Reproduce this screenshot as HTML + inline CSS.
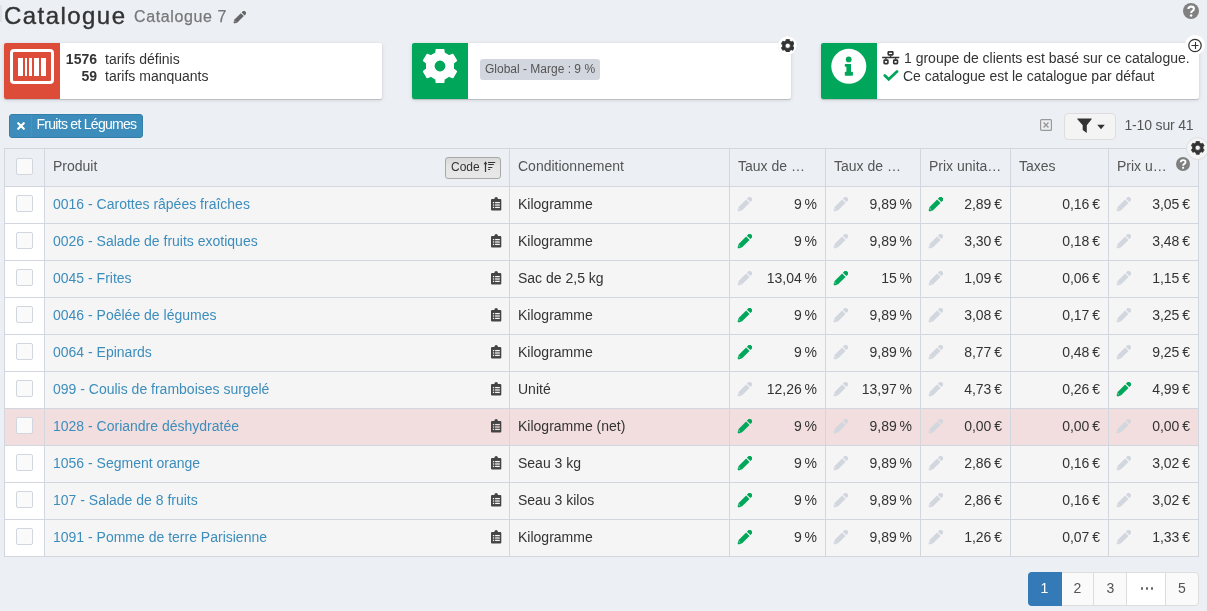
<!DOCTYPE html><html><head><meta charset="utf-8"><style>
*{margin:0;padding:0;box-sizing:border-box}
html,body{width:1207px;height:611px;overflow:hidden;background:#ecf0f5;font-family:"Liberation Sans",sans-serif;font-size:14px;color:#333}
.ab{position:absolute}
.t{position:absolute;white-space:nowrap;line-height:16px}
.vl{position:absolute;width:1px;background:#d2d6de}
.hl{position:absolute;height:1px;background:#d2d6de}
.cb{position:absolute;width:17px;height:17px;border:1px solid #d2d6de;border-radius:2px;background:#fafafa}
.box{position:absolute;top:43px;height:56px;background:#fff;border-radius:2px;box-shadow:0 1px 1px rgba(0,0,0,0.16),0 1px 4px rgba(0,0,0,0.13)}
.ic{position:absolute;left:0;top:0;width:56px;height:56px;border-radius:2px 0 0 2px}
</style></head><body><div id="w" style="position:absolute;left:0;top:0;width:1207px;height:611px;overflow:hidden;will-change:transform">

<div class="ab" style="left:0;top:5px;width:1.5px;height:17px;background:#dfe2e6"></div>
<div class="t" style="left:4px;top:1px;font-size:24px;line-height:30px;color:#333;letter-spacing:1.45px;-webkit-text-stroke:0.4px #333">Catalogue</div>
<div class="t" style="left:134px;top:7px;font-size:16px;line-height:20px;color:#777;letter-spacing:0.62px;-webkit-text-stroke:0.25px #777">Catalogue 7</div>
<div class="ab" style="left:233px;top:11px"><svg width="13" height="13" viewBox="0 0 16 16"><g transform="translate(8,8) rotate(-45)"><path fill="#666" d="M-9.6,-0.9 Q-9.8,0 -9.6,0.9 L-6.2,2.6 L5.0,2.6 L5.0,-2.6 L-6.2,-2.6 Z"/><path fill="#666" d="M6.2,-2.6 L8.8,-2.6 Q10.3,-2.6 10.3,-1.1 L10.3,1.1 Q10.3,2.6 8.8,2.6 L6.2,2.6 Z"/><circle cx="-7.4" cy="-0.5" r="0.75" fill="#f5f5f5" opacity="0.55"/></g></svg></div>
<svg class="ab" style="left:1183px;top:3px" width="16" height="16" viewBox="0 0 16 16"><circle cx="8" cy="8" r="8" fill="#808080"/><path d="M5.4,6 Q5.4,3.6 8.2,3.6 Q10.9,3.6 10.9,5.8 Q10.9,7.1 9.5,7.9 Q8.2,8.6 8.2,9.9" fill="none" stroke="#fff" stroke-width="2.1" stroke-linecap="butt"/><circle cx="8.1" cy="12.4" r="1.25" fill="#fff"/></svg>
<div class="box" style="left:4px;width:378px">
<div class="ic" style="background:#dd4b39"><div class="ab" style="left:5.7px;top:5.5px;width:44.7px;height:35.8px;border:3.4px solid #fff;border-radius:4px"></div>
<div class="ab" style="left:14.3px;top:15px;width:4.6px;height:18px;background:#fff"></div>
<div class="ab" style="left:21px;top:15px;width:2.3px;height:18px;background:#fff"></div>
<div class="ab" style="left:25.2px;top:15px;width:2.9px;height:18px;background:#fff"></div>
<div class="ab" style="left:30.4px;top:15px;width:4.6px;height:18px;background:#fff"></div>
<div class="ab" style="left:36.9px;top:15px;width:4.9px;height:18px;background:#fff"></div>
</div>
<div class="t" style="left:56px;top:8px;width:37px;text-align:right;font-weight:bold">1576</div>
<div class="t" style="left:101px;top:8px">tarifs définis</div>
<div class="t" style="left:56px;top:25px;width:37px;text-align:right;font-weight:bold">59</div>
<div class="t" style="left:101px;top:25px">tarifs manquants</div>
</div>
<div class="box" style="left:412px;width:379px">
<div class="ic" style="background:#00a65a"><div class="ab" style="left:11px;top:6.4px"><svg width="34" height="34" viewBox="0 0 16 16"><path fill="#fff" fill-rule="evenodd" stroke="#fff" stroke-width="0.9" stroke-linejoin="round" d="M9.83,1.97 L9.59,0.16 L6.41,0.16 L6.17,1.97 L3.69,3.40 L2.01,2.70 L0.41,5.46 L1.86,6.57 L1.86,9.43 L0.41,10.54 L2.01,13.30 L3.69,12.60 L6.17,14.03 L6.41,15.84 L9.59,15.84 L9.83,14.03 L12.31,12.60 L13.99,13.30 L15.59,10.54 L14.14,9.43 L14.14,6.57 L15.59,5.46 L13.99,2.70 L12.31,3.40 Z M5.00,8.00 a3.0,3.0 0 1,0 6.0,0 a3.0,3.0 0 1,0 -6.0,0 Z"/></svg></div></div>
<div class="ab" style="left:68px;top:16px;width:120px;height:21px;background:#d2d6de;border-radius:3px"></div>
<div class="t" style="left:73px;top:17.5px;font-size:12px;color:#555">Global - Marge : 9 %</div>
</div>
<div class="ab" style="left:778px;top:35.5px;width:19px;height:19px;border-radius:50%;background:#fff;box-shadow:0 0 1px rgba(0,0,0,0.15)"><div class="ab" style="left:2.5px;top:3px"><svg width="13.5" height="13.5" viewBox="0 0 16 16"><path fill="#333" fill-rule="evenodd" stroke="#333" stroke-width="0.9" stroke-linejoin="round" d="M10.03,2.03 L9.77,0.20 L6.23,0.20 L5.97,2.03 L3.85,3.26 L2.13,2.57 L0.36,5.63 L1.82,6.77 L1.82,9.23 L0.36,10.37 L2.13,13.43 L3.85,12.74 L5.97,13.97 L6.23,15.80 L9.77,15.80 L10.03,13.97 L12.15,12.74 L13.87,13.43 L15.64,10.37 L14.18,9.23 L14.18,6.77 L15.64,5.63 L13.87,2.57 L12.15,3.26 Z M4.90,8.00 a3.1,3.1 0 1,0 6.2,0 a3.1,3.1 0 1,0 -6.2,0 Z"/></svg></div></div>
<div class="box" style="left:821px;width:378px">
<div class="ic" style="background:#00a65a"><svg class="ab" style="left:0;top:0" width="56" height="56" viewBox="0 0 56 56"><circle cx="27.8" cy="23.3" r="17.5" fill="#fff"/><circle cx="27.7" cy="16.4" r="2.9" fill="#00a65a"/><path fill="#00a65a" d="M24.2,21 H30 V28.8 H31.2 Q31.9,28.8 31.9,29.5 V32 Q31.9,32.7 31.2,32.7 H24.4 Q23.8,32.7 23.8,32 V29.5 Q23.8,28.8 24.4,28.8 H25.4 V23.8 H24.4 Q23.8,23.8 23.8,23.1 V21.6 Q23.8,21 24.2,21 Z"/></svg></div>
<div class="ab" style="left:60px;top:7px"><svg width="20" height="17" viewBox="0 0 20 17" fill="none" stroke="#333"><rect x="7.2" y="1.9" width="4.7" height="3.0" rx="0.6" stroke-width="1.6"/><path d="M9.55,5.5 V7.5 M1.1,7.5 H18.3 M4.9,7.5 V9.6 M14.6,7.5 V9.6" stroke-width="1.4"/><rect x="3.1" y="10.1" width="3.8" height="3.5" rx="0.6" stroke-width="1.6"/><rect x="12.7" y="10.1" width="3.8" height="3.5" rx="0.6" stroke-width="1.6"/></svg></div>
<div class="t" style="left:83px;top:7px">1 groupe de clients est basé sur ce catalogue.</div>
<div class="ab" style="left:62px;top:26.3px"><svg width="16" height="12" viewBox="0 0 16 12"><path d="M1.8,5.5 L5.7,9.3 L14,1.5" fill="none" stroke="#00a65a" stroke-width="2.7" stroke-linecap="round"/></svg></div>
<div class="t" style="left:82px;top:24.5px">Ce catalogue est le catalogue par défaut</div>
</div>
<div class="ab" style="left:1185px;top:35px;width:20px;height:20px;border-radius:50%;background:#fff"><svg class="ab" style="left:2px;top:2px" width="16" height="16" viewBox="0 0 16 16"><circle cx="8" cy="8.5" r="6.2" fill="none" stroke="#333" stroke-width="1.25"/><path d="M8.5,5 V12 M4.5,8.5 H11.5" stroke="#333" stroke-width="1.1"/></svg></div>
<div class="ab" style="left:9px;top:114px;width:134px;height:24px;background:#3c8dbc;border:1px solid #367fa9;border-radius:3px"></div>
<div class="ab" style="left:31px;top:115px;width:1px;height:22px;background:#3f92d8"></div>
<svg class="ab" style="left:16.5px;top:122px" width="8" height="8" viewBox="0 0 8 8"><path d="M1.2,1.2 L6.8,6.8 M6.8,1.2 L1.2,6.8" stroke="#fff" stroke-width="2.1" stroke-linecap="round"/></svg>
<div class="t" style="left:36.5px;top:116px;color:#fff;font-size:14px;letter-spacing:-0.72px">Fruits et Légumes</div>
<svg class="ab" style="left:1040px;top:119px" width="12" height="12" viewBox="0 0 12 12"><rect x="0.6" y="0.6" width="10.8" height="10.8" rx="1" fill="none" stroke="#999" stroke-width="1.2"/><path d="M3.5,3.5 L8.5,8.5 M8.5,3.5 L3.5,8.5" stroke="#999" stroke-width="1.5"/></svg>
<div class="ab" style="left:1064px;top:113px;width:52px;height:27px;background:#f4f4f4;border:1px solid #ddd;border-radius:4px"></div>
<svg class="ab" style="left:1076px;top:118px" width="17" height="16" viewBox="0 0 17 16"><path d="M1.6,0.6 H15.4 Q16,0.6 15.6,1.2 L10.8,7.2 V14.9 L6.7,12 V7.2 L1.4,1.2 Q1,0.6 1.6,0.6 Z" fill="#333"/></svg>
<svg class="ab" style="left:1097px;top:124px" width="8" height="6" viewBox="0 0 8 6"><path d="M0.2,0.8 H7.8 L4,5.2 Z" fill="#333"/></svg>
<div class="t" style="left:1124.5px;top:117px;color:#555;letter-spacing:-0.17px">1-10 sur 41</div>
<div class="ab" style="left:4px;top:148px;width:1195px;height:38px;background:#ecf0f5"></div>
<div class="ab" style="left:4px;top:186px;width:41px;height:37px;background:#fff"></div>
<div class="ab" style="left:44px;top:186px;width:1155px;height:37px;background:#f5f5f5"></div>
<div class="ab" style="left:4px;top:223px;width:41px;height:37px;background:#fff"></div>
<div class="ab" style="left:44px;top:223px;width:1155px;height:37px;background:#f5f5f5"></div>
<div class="ab" style="left:4px;top:260px;width:41px;height:37px;background:#fff"></div>
<div class="ab" style="left:44px;top:260px;width:1155px;height:37px;background:#f5f5f5"></div>
<div class="ab" style="left:4px;top:297px;width:41px;height:37px;background:#fff"></div>
<div class="ab" style="left:44px;top:297px;width:1155px;height:37px;background:#f5f5f5"></div>
<div class="ab" style="left:4px;top:334px;width:41px;height:37px;background:#fff"></div>
<div class="ab" style="left:44px;top:334px;width:1155px;height:37px;background:#f5f5f5"></div>
<div class="ab" style="left:4px;top:371px;width:41px;height:37px;background:#fff"></div>
<div class="ab" style="left:44px;top:371px;width:1155px;height:37px;background:#f5f5f5"></div>
<div class="ab" style="left:4px;top:408px;width:41px;height:37px;background:#f2dede"></div>
<div class="ab" style="left:44px;top:408px;width:1155px;height:37px;background:#f2dede"></div>
<div class="ab" style="left:4px;top:445px;width:41px;height:37px;background:#fff"></div>
<div class="ab" style="left:44px;top:445px;width:1155px;height:37px;background:#f5f5f5"></div>
<div class="ab" style="left:4px;top:482px;width:41px;height:37px;background:#fff"></div>
<div class="ab" style="left:44px;top:482px;width:1155px;height:37px;background:#f5f5f5"></div>
<div class="ab" style="left:4px;top:519px;width:41px;height:37px;background:#fff"></div>
<div class="ab" style="left:44px;top:519px;width:1155px;height:37px;background:#f5f5f5"></div>
<div class="vl" style="left:4px;top:148px;height:409px"></div>
<div class="vl" style="left:44px;top:148px;height:409px"></div>
<div class="vl" style="left:509px;top:148px;height:409px"></div>
<div class="vl" style="left:729px;top:148px;height:409px"></div>
<div class="vl" style="left:825px;top:148px;height:409px"></div>
<div class="vl" style="left:920px;top:148px;height:409px"></div>
<div class="vl" style="left:1010px;top:148px;height:409px"></div>
<div class="vl" style="left:1108px;top:148px;height:409px"></div>
<div class="vl" style="left:1198px;top:148px;height:409px"></div>
<div class="hl" style="left:4px;top:148px;width:1195px"></div>
<div class="hl" style="left:4px;top:186px;width:1195px"></div>
<div class="hl" style="left:4px;top:223px;width:1195px"></div>
<div class="hl" style="left:4px;top:260px;width:1195px"></div>
<div class="hl" style="left:4px;top:297px;width:1195px"></div>
<div class="hl" style="left:4px;top:334px;width:1195px"></div>
<div class="hl" style="left:4px;top:371px;width:1195px"></div>
<div class="hl" style="left:4px;top:408px;width:1195px"></div>
<div class="hl" style="left:4px;top:445px;width:1195px"></div>
<div class="hl" style="left:4px;top:482px;width:1195px"></div>
<div class="hl" style="left:4px;top:519px;width:1195px"></div>
<div class="hl" style="left:4px;top:556px;width:1195px"></div>
<div class="cb" style="left:16px;top:158px"></div>
<div class="t" style="left:53px;top:158px;color:#555">Produit</div>
<div class="t" style="left:518px;top:158px;color:#555">Conditionnement</div>
<div class="t" style="left:738px;top:158px;color:#555">Taux de …</div>
<div class="t" style="left:834px;top:158px;color:#555">Taux de …</div>
<div class="t" style="left:929px;top:158px;color:#555">Prix unita…</div>
<div class="t" style="left:1019px;top:158px;color:#555">Taxes</div>
<div class="t" style="left:1117px;top:158px;color:#555">Prix u…</div>
<div class="ab" style="left:445px;top:157px;width:56px;height:22px;border:1px solid #a8a8a8;border-radius:3px;background:linear-gradient(#d8d8d8,#e5e5e5 45%,#e8e8e8)"></div>
<div class="t" style="left:451px;top:159px;font-size:12px;color:#333">Code</div>
<svg class="ab" style="left:483px;top:160px" width="14" height="14" viewBox="0 0 14 14"><path d="M2.5,12 V3" stroke="#333" stroke-width="1.2" fill="none"/><path d="M0.7,4.2 L2.5,1.3 L4.3,4.2 Z" fill="#333"/><path d="M5,2.5 H12.2 M5.2,4.5 H10.8 M5.2,7.5 H9.3 M5.2,9.5 H7.2" stroke="#333" stroke-width="1.05"/></svg>
<svg class="ab" style="left:1176px;top:157px" width="14" height="14" viewBox="0 0 16 16"><circle cx="8" cy="8" r="8" fill="#808080"/><path d="M5.4,6 Q5.4,3.6 8.2,3.6 Q10.9,3.6 10.9,5.8 Q10.9,7.1 9.5,7.9 Q8.2,8.6 8.2,9.9" fill="none" stroke="#fff" stroke-width="2.1" stroke-linecap="butt"/><circle cx="8.1" cy="12.4" r="1.25" fill="#fff"/></svg>
<div class="ab" style="left:1186px;top:137px;width:23px;height:23px;border-radius:50%;background:#f4f4f4;border:1px solid #ddd"><div class="ab" style="left:4px;top:3px"><svg width="13.5" height="13.5" viewBox="0 0 16 16"><path fill="#333" fill-rule="evenodd" stroke="#333" stroke-width="0.9" stroke-linejoin="round" d="M10.03,2.03 L9.77,0.20 L6.23,0.20 L5.97,2.03 L3.85,3.26 L2.13,2.57 L0.36,5.63 L1.82,6.77 L1.82,9.23 L0.36,10.37 L2.13,13.43 L3.85,12.74 L5.97,13.97 L6.23,15.80 L9.77,15.80 L10.03,13.97 L12.15,12.74 L13.87,13.43 L15.64,10.37 L14.18,9.23 L14.18,6.77 L15.64,5.63 L13.87,2.57 L12.15,3.26 Z M4.90,8.00 a3.1,3.1 0 1,0 6.2,0 a3.1,3.1 0 1,0 -6.2,0 Z"/></svg></div></div>
<div class="cb" style="left:16px;top:195px"></div>
<div class="t" style="left:53px;top:196px;color:#3c8dbc">0016 - Carottes râpées fraîches</div>
<div class="ab" style="left:491px;top:197px"><svg width="11" height="14" viewBox="0 0 11 14"><path fill="#444" d="M1,2 H3.3 Q3.5,0.1 5.15,0.1 Q6.8,0.1 7,2 H9.3 Q10.3,2 10.3,3 V12.4 Q10.3,13.4 9.3,13.4 H1 Q0,13.4 0,12.4 V3 Q0,2 1,2 Z"/><rect x="1.9" y="4.95" width="1.3" height="1.3" fill="#f5f5f5"/><rect x="4.1" y="4.95" width="4.7" height="1.3" fill="#f5f5f5"/><rect x="1.9" y="7.35" width="1.3" height="1.3" fill="#f5f5f5"/><rect x="4.1" y="7.35" width="4.7" height="1.3" fill="#f5f5f5"/><rect x="1.9" y="9.75" width="1.3" height="1.3" fill="#f5f5f5"/><rect x="4.1" y="9.75" width="4.7" height="1.3" fill="#f5f5f5"/></svg></div>
<div class="t" style="left:518px;top:196px">Kilogramme</div>
<div class="ab" style="left:737px;top:197px"><svg width="15" height="15" viewBox="0 0 16 16"><g transform="translate(8,8) rotate(-45)"><path fill="#d2d6de" d="M-9.6,-0.9 Q-9.8,0 -9.6,0.9 L-6.2,2.6 L5.0,2.6 L5.0,-2.6 L-6.2,-2.6 Z"/><path fill="#d2d6de" d="M6.2,-2.6 L8.8,-2.6 Q10.3,-2.6 10.3,-1.1 L10.3,1.1 Q10.3,2.6 8.8,2.6 L6.2,2.6 Z"/><circle cx="-7.4" cy="-0.5" r="0.75" fill="#f5f5f5" opacity="0.55"/></g></svg></div>
<div class="t" style="right:390px;top:196px">9 %</div>
<div class="ab" style="left:833px;top:197px"><svg width="15" height="15" viewBox="0 0 16 16"><g transform="translate(8,8) rotate(-45)"><path fill="#d2d6de" d="M-9.6,-0.9 Q-9.8,0 -9.6,0.9 L-6.2,2.6 L5.0,2.6 L5.0,-2.6 L-6.2,-2.6 Z"/><path fill="#d2d6de" d="M6.2,-2.6 L8.8,-2.6 Q10.3,-2.6 10.3,-1.1 L10.3,1.1 Q10.3,2.6 8.8,2.6 L6.2,2.6 Z"/><circle cx="-7.4" cy="-0.5" r="0.75" fill="#f5f5f5" opacity="0.55"/></g></svg></div>
<div class="t" style="right:295px;top:196px">9,89 %</div>
<div class="ab" style="left:928px;top:197px"><svg width="15" height="15" viewBox="0 0 16 16"><g transform="translate(8,8) rotate(-45)"><path fill="#00a65a" d="M-9.6,-0.9 Q-9.8,0 -9.6,0.9 L-6.2,2.6 L5.0,2.6 L5.0,-2.6 L-6.2,-2.6 Z"/><path fill="#00a65a" d="M6.2,-2.6 L8.8,-2.6 Q10.3,-2.6 10.3,-1.1 L10.3,1.1 Q10.3,2.6 8.8,2.6 L6.2,2.6 Z"/><circle cx="-7.4" cy="-0.5" r="0.75" fill="#f5f5f5" opacity="0.55"/></g></svg></div>
<div class="t" style="right:205px;top:196px">2,89 €</div>
<div class="t" style="right:107px;top:196px">0,16 €</div>
<div class="ab" style="left:1116px;top:197px"><svg width="15" height="15" viewBox="0 0 16 16"><g transform="translate(8,8) rotate(-45)"><path fill="#d2d6de" d="M-9.6,-0.9 Q-9.8,0 -9.6,0.9 L-6.2,2.6 L5.0,2.6 L5.0,-2.6 L-6.2,-2.6 Z"/><path fill="#d2d6de" d="M6.2,-2.6 L8.8,-2.6 Q10.3,-2.6 10.3,-1.1 L10.3,1.1 Q10.3,2.6 8.8,2.6 L6.2,2.6 Z"/><circle cx="-7.4" cy="-0.5" r="0.75" fill="#f5f5f5" opacity="0.55"/></g></svg></div>
<div class="t" style="right:17px;top:196px">3,05 €</div>
<div class="cb" style="left:16px;top:232px"></div>
<div class="t" style="left:53px;top:233px;color:#3c8dbc">0026 - Salade de fruits exotiques</div>
<div class="ab" style="left:491px;top:234px"><svg width="11" height="14" viewBox="0 0 11 14"><path fill="#444" d="M1,2 H3.3 Q3.5,0.1 5.15,0.1 Q6.8,0.1 7,2 H9.3 Q10.3,2 10.3,3 V12.4 Q10.3,13.4 9.3,13.4 H1 Q0,13.4 0,12.4 V3 Q0,2 1,2 Z"/><rect x="1.9" y="4.95" width="1.3" height="1.3" fill="#f5f5f5"/><rect x="4.1" y="4.95" width="4.7" height="1.3" fill="#f5f5f5"/><rect x="1.9" y="7.35" width="1.3" height="1.3" fill="#f5f5f5"/><rect x="4.1" y="7.35" width="4.7" height="1.3" fill="#f5f5f5"/><rect x="1.9" y="9.75" width="1.3" height="1.3" fill="#f5f5f5"/><rect x="4.1" y="9.75" width="4.7" height="1.3" fill="#f5f5f5"/></svg></div>
<div class="t" style="left:518px;top:233px">Kilogramme</div>
<div class="ab" style="left:737px;top:234px"><svg width="15" height="15" viewBox="0 0 16 16"><g transform="translate(8,8) rotate(-45)"><path fill="#00a65a" d="M-9.6,-0.9 Q-9.8,0 -9.6,0.9 L-6.2,2.6 L5.0,2.6 L5.0,-2.6 L-6.2,-2.6 Z"/><path fill="#00a65a" d="M6.2,-2.6 L8.8,-2.6 Q10.3,-2.6 10.3,-1.1 L10.3,1.1 Q10.3,2.6 8.8,2.6 L6.2,2.6 Z"/><circle cx="-7.4" cy="-0.5" r="0.75" fill="#f5f5f5" opacity="0.55"/></g></svg></div>
<div class="t" style="right:390px;top:233px">9 %</div>
<div class="ab" style="left:833px;top:234px"><svg width="15" height="15" viewBox="0 0 16 16"><g transform="translate(8,8) rotate(-45)"><path fill="#d2d6de" d="M-9.6,-0.9 Q-9.8,0 -9.6,0.9 L-6.2,2.6 L5.0,2.6 L5.0,-2.6 L-6.2,-2.6 Z"/><path fill="#d2d6de" d="M6.2,-2.6 L8.8,-2.6 Q10.3,-2.6 10.3,-1.1 L10.3,1.1 Q10.3,2.6 8.8,2.6 L6.2,2.6 Z"/><circle cx="-7.4" cy="-0.5" r="0.75" fill="#f5f5f5" opacity="0.55"/></g></svg></div>
<div class="t" style="right:295px;top:233px">9,89 %</div>
<div class="ab" style="left:928px;top:234px"><svg width="15" height="15" viewBox="0 0 16 16"><g transform="translate(8,8) rotate(-45)"><path fill="#d2d6de" d="M-9.6,-0.9 Q-9.8,0 -9.6,0.9 L-6.2,2.6 L5.0,2.6 L5.0,-2.6 L-6.2,-2.6 Z"/><path fill="#d2d6de" d="M6.2,-2.6 L8.8,-2.6 Q10.3,-2.6 10.3,-1.1 L10.3,1.1 Q10.3,2.6 8.8,2.6 L6.2,2.6 Z"/><circle cx="-7.4" cy="-0.5" r="0.75" fill="#f5f5f5" opacity="0.55"/></g></svg></div>
<div class="t" style="right:205px;top:233px">3,30 €</div>
<div class="t" style="right:107px;top:233px">0,18 €</div>
<div class="ab" style="left:1116px;top:234px"><svg width="15" height="15" viewBox="0 0 16 16"><g transform="translate(8,8) rotate(-45)"><path fill="#d2d6de" d="M-9.6,-0.9 Q-9.8,0 -9.6,0.9 L-6.2,2.6 L5.0,2.6 L5.0,-2.6 L-6.2,-2.6 Z"/><path fill="#d2d6de" d="M6.2,-2.6 L8.8,-2.6 Q10.3,-2.6 10.3,-1.1 L10.3,1.1 Q10.3,2.6 8.8,2.6 L6.2,2.6 Z"/><circle cx="-7.4" cy="-0.5" r="0.75" fill="#f5f5f5" opacity="0.55"/></g></svg></div>
<div class="t" style="right:17px;top:233px">3,48 €</div>
<div class="cb" style="left:16px;top:269px"></div>
<div class="t" style="left:53px;top:270px;color:#3c8dbc">0045 - Frites</div>
<div class="ab" style="left:491px;top:271px"><svg width="11" height="14" viewBox="0 0 11 14"><path fill="#444" d="M1,2 H3.3 Q3.5,0.1 5.15,0.1 Q6.8,0.1 7,2 H9.3 Q10.3,2 10.3,3 V12.4 Q10.3,13.4 9.3,13.4 H1 Q0,13.4 0,12.4 V3 Q0,2 1,2 Z"/><rect x="1.9" y="4.95" width="1.3" height="1.3" fill="#f5f5f5"/><rect x="4.1" y="4.95" width="4.7" height="1.3" fill="#f5f5f5"/><rect x="1.9" y="7.35" width="1.3" height="1.3" fill="#f5f5f5"/><rect x="4.1" y="7.35" width="4.7" height="1.3" fill="#f5f5f5"/><rect x="1.9" y="9.75" width="1.3" height="1.3" fill="#f5f5f5"/><rect x="4.1" y="9.75" width="4.7" height="1.3" fill="#f5f5f5"/></svg></div>
<div class="t" style="left:518px;top:270px">Sac de 2,5 kg</div>
<div class="ab" style="left:737px;top:271px"><svg width="15" height="15" viewBox="0 0 16 16"><g transform="translate(8,8) rotate(-45)"><path fill="#d2d6de" d="M-9.6,-0.9 Q-9.8,0 -9.6,0.9 L-6.2,2.6 L5.0,2.6 L5.0,-2.6 L-6.2,-2.6 Z"/><path fill="#d2d6de" d="M6.2,-2.6 L8.8,-2.6 Q10.3,-2.6 10.3,-1.1 L10.3,1.1 Q10.3,2.6 8.8,2.6 L6.2,2.6 Z"/><circle cx="-7.4" cy="-0.5" r="0.75" fill="#f5f5f5" opacity="0.55"/></g></svg></div>
<div class="t" style="right:390px;top:270px">13,04 %</div>
<div class="ab" style="left:833px;top:271px"><svg width="15" height="15" viewBox="0 0 16 16"><g transform="translate(8,8) rotate(-45)"><path fill="#00a65a" d="M-9.6,-0.9 Q-9.8,0 -9.6,0.9 L-6.2,2.6 L5.0,2.6 L5.0,-2.6 L-6.2,-2.6 Z"/><path fill="#00a65a" d="M6.2,-2.6 L8.8,-2.6 Q10.3,-2.6 10.3,-1.1 L10.3,1.1 Q10.3,2.6 8.8,2.6 L6.2,2.6 Z"/><circle cx="-7.4" cy="-0.5" r="0.75" fill="#f5f5f5" opacity="0.55"/></g></svg></div>
<div class="t" style="right:295px;top:270px">15 %</div>
<div class="ab" style="left:928px;top:271px"><svg width="15" height="15" viewBox="0 0 16 16"><g transform="translate(8,8) rotate(-45)"><path fill="#d2d6de" d="M-9.6,-0.9 Q-9.8,0 -9.6,0.9 L-6.2,2.6 L5.0,2.6 L5.0,-2.6 L-6.2,-2.6 Z"/><path fill="#d2d6de" d="M6.2,-2.6 L8.8,-2.6 Q10.3,-2.6 10.3,-1.1 L10.3,1.1 Q10.3,2.6 8.8,2.6 L6.2,2.6 Z"/><circle cx="-7.4" cy="-0.5" r="0.75" fill="#f5f5f5" opacity="0.55"/></g></svg></div>
<div class="t" style="right:205px;top:270px">1,09 €</div>
<div class="t" style="right:107px;top:270px">0,06 €</div>
<div class="ab" style="left:1116px;top:271px"><svg width="15" height="15" viewBox="0 0 16 16"><g transform="translate(8,8) rotate(-45)"><path fill="#d2d6de" d="M-9.6,-0.9 Q-9.8,0 -9.6,0.9 L-6.2,2.6 L5.0,2.6 L5.0,-2.6 L-6.2,-2.6 Z"/><path fill="#d2d6de" d="M6.2,-2.6 L8.8,-2.6 Q10.3,-2.6 10.3,-1.1 L10.3,1.1 Q10.3,2.6 8.8,2.6 L6.2,2.6 Z"/><circle cx="-7.4" cy="-0.5" r="0.75" fill="#f5f5f5" opacity="0.55"/></g></svg></div>
<div class="t" style="right:17px;top:270px">1,15 €</div>
<div class="cb" style="left:16px;top:306px"></div>
<div class="t" style="left:53px;top:307px;color:#3c8dbc">0046 - Poêlée de légumes</div>
<div class="ab" style="left:491px;top:308px"><svg width="11" height="14" viewBox="0 0 11 14"><path fill="#444" d="M1,2 H3.3 Q3.5,0.1 5.15,0.1 Q6.8,0.1 7,2 H9.3 Q10.3,2 10.3,3 V12.4 Q10.3,13.4 9.3,13.4 H1 Q0,13.4 0,12.4 V3 Q0,2 1,2 Z"/><rect x="1.9" y="4.95" width="1.3" height="1.3" fill="#f5f5f5"/><rect x="4.1" y="4.95" width="4.7" height="1.3" fill="#f5f5f5"/><rect x="1.9" y="7.35" width="1.3" height="1.3" fill="#f5f5f5"/><rect x="4.1" y="7.35" width="4.7" height="1.3" fill="#f5f5f5"/><rect x="1.9" y="9.75" width="1.3" height="1.3" fill="#f5f5f5"/><rect x="4.1" y="9.75" width="4.7" height="1.3" fill="#f5f5f5"/></svg></div>
<div class="t" style="left:518px;top:307px">Kilogramme</div>
<div class="ab" style="left:737px;top:308px"><svg width="15" height="15" viewBox="0 0 16 16"><g transform="translate(8,8) rotate(-45)"><path fill="#00a65a" d="M-9.6,-0.9 Q-9.8,0 -9.6,0.9 L-6.2,2.6 L5.0,2.6 L5.0,-2.6 L-6.2,-2.6 Z"/><path fill="#00a65a" d="M6.2,-2.6 L8.8,-2.6 Q10.3,-2.6 10.3,-1.1 L10.3,1.1 Q10.3,2.6 8.8,2.6 L6.2,2.6 Z"/><circle cx="-7.4" cy="-0.5" r="0.75" fill="#f5f5f5" opacity="0.55"/></g></svg></div>
<div class="t" style="right:390px;top:307px">9 %</div>
<div class="ab" style="left:833px;top:308px"><svg width="15" height="15" viewBox="0 0 16 16"><g transform="translate(8,8) rotate(-45)"><path fill="#d2d6de" d="M-9.6,-0.9 Q-9.8,0 -9.6,0.9 L-6.2,2.6 L5.0,2.6 L5.0,-2.6 L-6.2,-2.6 Z"/><path fill="#d2d6de" d="M6.2,-2.6 L8.8,-2.6 Q10.3,-2.6 10.3,-1.1 L10.3,1.1 Q10.3,2.6 8.8,2.6 L6.2,2.6 Z"/><circle cx="-7.4" cy="-0.5" r="0.75" fill="#f5f5f5" opacity="0.55"/></g></svg></div>
<div class="t" style="right:295px;top:307px">9,89 %</div>
<div class="ab" style="left:928px;top:308px"><svg width="15" height="15" viewBox="0 0 16 16"><g transform="translate(8,8) rotate(-45)"><path fill="#d2d6de" d="M-9.6,-0.9 Q-9.8,0 -9.6,0.9 L-6.2,2.6 L5.0,2.6 L5.0,-2.6 L-6.2,-2.6 Z"/><path fill="#d2d6de" d="M6.2,-2.6 L8.8,-2.6 Q10.3,-2.6 10.3,-1.1 L10.3,1.1 Q10.3,2.6 8.8,2.6 L6.2,2.6 Z"/><circle cx="-7.4" cy="-0.5" r="0.75" fill="#f5f5f5" opacity="0.55"/></g></svg></div>
<div class="t" style="right:205px;top:307px">3,08 €</div>
<div class="t" style="right:107px;top:307px">0,17 €</div>
<div class="ab" style="left:1116px;top:308px"><svg width="15" height="15" viewBox="0 0 16 16"><g transform="translate(8,8) rotate(-45)"><path fill="#d2d6de" d="M-9.6,-0.9 Q-9.8,0 -9.6,0.9 L-6.2,2.6 L5.0,2.6 L5.0,-2.6 L-6.2,-2.6 Z"/><path fill="#d2d6de" d="M6.2,-2.6 L8.8,-2.6 Q10.3,-2.6 10.3,-1.1 L10.3,1.1 Q10.3,2.6 8.8,2.6 L6.2,2.6 Z"/><circle cx="-7.4" cy="-0.5" r="0.75" fill="#f5f5f5" opacity="0.55"/></g></svg></div>
<div class="t" style="right:17px;top:307px">3,25 €</div>
<div class="cb" style="left:16px;top:343px"></div>
<div class="t" style="left:53px;top:344px;color:#3c8dbc">0064 - Epinards</div>
<div class="ab" style="left:491px;top:345px"><svg width="11" height="14" viewBox="0 0 11 14"><path fill="#444" d="M1,2 H3.3 Q3.5,0.1 5.15,0.1 Q6.8,0.1 7,2 H9.3 Q10.3,2 10.3,3 V12.4 Q10.3,13.4 9.3,13.4 H1 Q0,13.4 0,12.4 V3 Q0,2 1,2 Z"/><rect x="1.9" y="4.95" width="1.3" height="1.3" fill="#f5f5f5"/><rect x="4.1" y="4.95" width="4.7" height="1.3" fill="#f5f5f5"/><rect x="1.9" y="7.35" width="1.3" height="1.3" fill="#f5f5f5"/><rect x="4.1" y="7.35" width="4.7" height="1.3" fill="#f5f5f5"/><rect x="1.9" y="9.75" width="1.3" height="1.3" fill="#f5f5f5"/><rect x="4.1" y="9.75" width="4.7" height="1.3" fill="#f5f5f5"/></svg></div>
<div class="t" style="left:518px;top:344px">Kilogramme</div>
<div class="ab" style="left:737px;top:345px"><svg width="15" height="15" viewBox="0 0 16 16"><g transform="translate(8,8) rotate(-45)"><path fill="#00a65a" d="M-9.6,-0.9 Q-9.8,0 -9.6,0.9 L-6.2,2.6 L5.0,2.6 L5.0,-2.6 L-6.2,-2.6 Z"/><path fill="#00a65a" d="M6.2,-2.6 L8.8,-2.6 Q10.3,-2.6 10.3,-1.1 L10.3,1.1 Q10.3,2.6 8.8,2.6 L6.2,2.6 Z"/><circle cx="-7.4" cy="-0.5" r="0.75" fill="#f5f5f5" opacity="0.55"/></g></svg></div>
<div class="t" style="right:390px;top:344px">9 %</div>
<div class="ab" style="left:833px;top:345px"><svg width="15" height="15" viewBox="0 0 16 16"><g transform="translate(8,8) rotate(-45)"><path fill="#d2d6de" d="M-9.6,-0.9 Q-9.8,0 -9.6,0.9 L-6.2,2.6 L5.0,2.6 L5.0,-2.6 L-6.2,-2.6 Z"/><path fill="#d2d6de" d="M6.2,-2.6 L8.8,-2.6 Q10.3,-2.6 10.3,-1.1 L10.3,1.1 Q10.3,2.6 8.8,2.6 L6.2,2.6 Z"/><circle cx="-7.4" cy="-0.5" r="0.75" fill="#f5f5f5" opacity="0.55"/></g></svg></div>
<div class="t" style="right:295px;top:344px">9,89 %</div>
<div class="ab" style="left:928px;top:345px"><svg width="15" height="15" viewBox="0 0 16 16"><g transform="translate(8,8) rotate(-45)"><path fill="#d2d6de" d="M-9.6,-0.9 Q-9.8,0 -9.6,0.9 L-6.2,2.6 L5.0,2.6 L5.0,-2.6 L-6.2,-2.6 Z"/><path fill="#d2d6de" d="M6.2,-2.6 L8.8,-2.6 Q10.3,-2.6 10.3,-1.1 L10.3,1.1 Q10.3,2.6 8.8,2.6 L6.2,2.6 Z"/><circle cx="-7.4" cy="-0.5" r="0.75" fill="#f5f5f5" opacity="0.55"/></g></svg></div>
<div class="t" style="right:205px;top:344px">8,77 €</div>
<div class="t" style="right:107px;top:344px">0,48 €</div>
<div class="ab" style="left:1116px;top:345px"><svg width="15" height="15" viewBox="0 0 16 16"><g transform="translate(8,8) rotate(-45)"><path fill="#d2d6de" d="M-9.6,-0.9 Q-9.8,0 -9.6,0.9 L-6.2,2.6 L5.0,2.6 L5.0,-2.6 L-6.2,-2.6 Z"/><path fill="#d2d6de" d="M6.2,-2.6 L8.8,-2.6 Q10.3,-2.6 10.3,-1.1 L10.3,1.1 Q10.3,2.6 8.8,2.6 L6.2,2.6 Z"/><circle cx="-7.4" cy="-0.5" r="0.75" fill="#f5f5f5" opacity="0.55"/></g></svg></div>
<div class="t" style="right:17px;top:344px">9,25 €</div>
<div class="cb" style="left:16px;top:380px"></div>
<div class="t" style="left:53px;top:381px;color:#3c8dbc">099 - Coulis de framboises surgelé</div>
<div class="ab" style="left:491px;top:382px"><svg width="11" height="14" viewBox="0 0 11 14"><path fill="#444" d="M1,2 H3.3 Q3.5,0.1 5.15,0.1 Q6.8,0.1 7,2 H9.3 Q10.3,2 10.3,3 V12.4 Q10.3,13.4 9.3,13.4 H1 Q0,13.4 0,12.4 V3 Q0,2 1,2 Z"/><rect x="1.9" y="4.95" width="1.3" height="1.3" fill="#f5f5f5"/><rect x="4.1" y="4.95" width="4.7" height="1.3" fill="#f5f5f5"/><rect x="1.9" y="7.35" width="1.3" height="1.3" fill="#f5f5f5"/><rect x="4.1" y="7.35" width="4.7" height="1.3" fill="#f5f5f5"/><rect x="1.9" y="9.75" width="1.3" height="1.3" fill="#f5f5f5"/><rect x="4.1" y="9.75" width="4.7" height="1.3" fill="#f5f5f5"/></svg></div>
<div class="t" style="left:518px;top:381px">Unité</div>
<div class="ab" style="left:737px;top:382px"><svg width="15" height="15" viewBox="0 0 16 16"><g transform="translate(8,8) rotate(-45)"><path fill="#d2d6de" d="M-9.6,-0.9 Q-9.8,0 -9.6,0.9 L-6.2,2.6 L5.0,2.6 L5.0,-2.6 L-6.2,-2.6 Z"/><path fill="#d2d6de" d="M6.2,-2.6 L8.8,-2.6 Q10.3,-2.6 10.3,-1.1 L10.3,1.1 Q10.3,2.6 8.8,2.6 L6.2,2.6 Z"/><circle cx="-7.4" cy="-0.5" r="0.75" fill="#f5f5f5" opacity="0.55"/></g></svg></div>
<div class="t" style="right:390px;top:381px">12,26 %</div>
<div class="ab" style="left:833px;top:382px"><svg width="15" height="15" viewBox="0 0 16 16"><g transform="translate(8,8) rotate(-45)"><path fill="#d2d6de" d="M-9.6,-0.9 Q-9.8,0 -9.6,0.9 L-6.2,2.6 L5.0,2.6 L5.0,-2.6 L-6.2,-2.6 Z"/><path fill="#d2d6de" d="M6.2,-2.6 L8.8,-2.6 Q10.3,-2.6 10.3,-1.1 L10.3,1.1 Q10.3,2.6 8.8,2.6 L6.2,2.6 Z"/><circle cx="-7.4" cy="-0.5" r="0.75" fill="#f5f5f5" opacity="0.55"/></g></svg></div>
<div class="t" style="right:295px;top:381px">13,97 %</div>
<div class="ab" style="left:928px;top:382px"><svg width="15" height="15" viewBox="0 0 16 16"><g transform="translate(8,8) rotate(-45)"><path fill="#d2d6de" d="M-9.6,-0.9 Q-9.8,0 -9.6,0.9 L-6.2,2.6 L5.0,2.6 L5.0,-2.6 L-6.2,-2.6 Z"/><path fill="#d2d6de" d="M6.2,-2.6 L8.8,-2.6 Q10.3,-2.6 10.3,-1.1 L10.3,1.1 Q10.3,2.6 8.8,2.6 L6.2,2.6 Z"/><circle cx="-7.4" cy="-0.5" r="0.75" fill="#f5f5f5" opacity="0.55"/></g></svg></div>
<div class="t" style="right:205px;top:381px">4,73 €</div>
<div class="t" style="right:107px;top:381px">0,26 €</div>
<div class="ab" style="left:1116px;top:382px"><svg width="15" height="15" viewBox="0 0 16 16"><g transform="translate(8,8) rotate(-45)"><path fill="#00a65a" d="M-9.6,-0.9 Q-9.8,0 -9.6,0.9 L-6.2,2.6 L5.0,2.6 L5.0,-2.6 L-6.2,-2.6 Z"/><path fill="#00a65a" d="M6.2,-2.6 L8.8,-2.6 Q10.3,-2.6 10.3,-1.1 L10.3,1.1 Q10.3,2.6 8.8,2.6 L6.2,2.6 Z"/><circle cx="-7.4" cy="-0.5" r="0.75" fill="#f5f5f5" opacity="0.55"/></g></svg></div>
<div class="t" style="right:17px;top:381px">4,99 €</div>
<div class="cb" style="left:16px;top:417px"></div>
<div class="t" style="left:53px;top:418px;color:#3c8dbc">1028 - Coriandre déshydratée</div>
<div class="ab" style="left:491px;top:419px"><svg width="11" height="14" viewBox="0 0 11 14"><path fill="#444" d="M1,2 H3.3 Q3.5,0.1 5.15,0.1 Q6.8,0.1 7,2 H9.3 Q10.3,2 10.3,3 V12.4 Q10.3,13.4 9.3,13.4 H1 Q0,13.4 0,12.4 V3 Q0,2 1,2 Z"/><rect x="1.9" y="4.95" width="1.3" height="1.3" fill="#f2dede"/><rect x="4.1" y="4.95" width="4.7" height="1.3" fill="#f2dede"/><rect x="1.9" y="7.35" width="1.3" height="1.3" fill="#f2dede"/><rect x="4.1" y="7.35" width="4.7" height="1.3" fill="#f2dede"/><rect x="1.9" y="9.75" width="1.3" height="1.3" fill="#f2dede"/><rect x="4.1" y="9.75" width="4.7" height="1.3" fill="#f2dede"/></svg></div>
<div class="t" style="left:518px;top:418px">Kilogramme (net)</div>
<div class="ab" style="left:737px;top:419px"><svg width="15" height="15" viewBox="0 0 16 16"><g transform="translate(8,8) rotate(-45)"><path fill="#00a65a" d="M-9.6,-0.9 Q-9.8,0 -9.6,0.9 L-6.2,2.6 L5.0,2.6 L5.0,-2.6 L-6.2,-2.6 Z"/><path fill="#00a65a" d="M6.2,-2.6 L8.8,-2.6 Q10.3,-2.6 10.3,-1.1 L10.3,1.1 Q10.3,2.6 8.8,2.6 L6.2,2.6 Z"/><circle cx="-7.4" cy="-0.5" r="0.75" fill="#f2dede" opacity="0.55"/></g></svg></div>
<div class="t" style="right:390px;top:418px">9 %</div>
<div class="ab" style="left:833px;top:419px"><svg width="15" height="15" viewBox="0 0 16 16"><g transform="translate(8,8) rotate(-45)"><path fill="#d2d6de" d="M-9.6,-0.9 Q-9.8,0 -9.6,0.9 L-6.2,2.6 L5.0,2.6 L5.0,-2.6 L-6.2,-2.6 Z"/><path fill="#d2d6de" d="M6.2,-2.6 L8.8,-2.6 Q10.3,-2.6 10.3,-1.1 L10.3,1.1 Q10.3,2.6 8.8,2.6 L6.2,2.6 Z"/><circle cx="-7.4" cy="-0.5" r="0.75" fill="#f2dede" opacity="0.55"/></g></svg></div>
<div class="t" style="right:295px;top:418px">9,89 %</div>
<div class="ab" style="left:928px;top:419px"><svg width="15" height="15" viewBox="0 0 16 16"><g transform="translate(8,8) rotate(-45)"><path fill="#d2d6de" d="M-9.6,-0.9 Q-9.8,0 -9.6,0.9 L-6.2,2.6 L5.0,2.6 L5.0,-2.6 L-6.2,-2.6 Z"/><path fill="#d2d6de" d="M6.2,-2.6 L8.8,-2.6 Q10.3,-2.6 10.3,-1.1 L10.3,1.1 Q10.3,2.6 8.8,2.6 L6.2,2.6 Z"/><circle cx="-7.4" cy="-0.5" r="0.75" fill="#f2dede" opacity="0.55"/></g></svg></div>
<div class="t" style="right:205px;top:418px">0,00 €</div>
<div class="t" style="right:107px;top:418px">0,00 €</div>
<div class="ab" style="left:1116px;top:419px"><svg width="15" height="15" viewBox="0 0 16 16"><g transform="translate(8,8) rotate(-45)"><path fill="#d2d6de" d="M-9.6,-0.9 Q-9.8,0 -9.6,0.9 L-6.2,2.6 L5.0,2.6 L5.0,-2.6 L-6.2,-2.6 Z"/><path fill="#d2d6de" d="M6.2,-2.6 L8.8,-2.6 Q10.3,-2.6 10.3,-1.1 L10.3,1.1 Q10.3,2.6 8.8,2.6 L6.2,2.6 Z"/><circle cx="-7.4" cy="-0.5" r="0.75" fill="#f2dede" opacity="0.55"/></g></svg></div>
<div class="t" style="right:17px;top:418px">0,00 €</div>
<div class="cb" style="left:16px;top:454px"></div>
<div class="t" style="left:53px;top:455px;color:#3c8dbc">1056 - Segment orange</div>
<div class="ab" style="left:491px;top:456px"><svg width="11" height="14" viewBox="0 0 11 14"><path fill="#444" d="M1,2 H3.3 Q3.5,0.1 5.15,0.1 Q6.8,0.1 7,2 H9.3 Q10.3,2 10.3,3 V12.4 Q10.3,13.4 9.3,13.4 H1 Q0,13.4 0,12.4 V3 Q0,2 1,2 Z"/><rect x="1.9" y="4.95" width="1.3" height="1.3" fill="#f5f5f5"/><rect x="4.1" y="4.95" width="4.7" height="1.3" fill="#f5f5f5"/><rect x="1.9" y="7.35" width="1.3" height="1.3" fill="#f5f5f5"/><rect x="4.1" y="7.35" width="4.7" height="1.3" fill="#f5f5f5"/><rect x="1.9" y="9.75" width="1.3" height="1.3" fill="#f5f5f5"/><rect x="4.1" y="9.75" width="4.7" height="1.3" fill="#f5f5f5"/></svg></div>
<div class="t" style="left:518px;top:455px">Seau 3 kg</div>
<div class="ab" style="left:737px;top:456px"><svg width="15" height="15" viewBox="0 0 16 16"><g transform="translate(8,8) rotate(-45)"><path fill="#00a65a" d="M-9.6,-0.9 Q-9.8,0 -9.6,0.9 L-6.2,2.6 L5.0,2.6 L5.0,-2.6 L-6.2,-2.6 Z"/><path fill="#00a65a" d="M6.2,-2.6 L8.8,-2.6 Q10.3,-2.6 10.3,-1.1 L10.3,1.1 Q10.3,2.6 8.8,2.6 L6.2,2.6 Z"/><circle cx="-7.4" cy="-0.5" r="0.75" fill="#f5f5f5" opacity="0.55"/></g></svg></div>
<div class="t" style="right:390px;top:455px">9 %</div>
<div class="ab" style="left:833px;top:456px"><svg width="15" height="15" viewBox="0 0 16 16"><g transform="translate(8,8) rotate(-45)"><path fill="#d2d6de" d="M-9.6,-0.9 Q-9.8,0 -9.6,0.9 L-6.2,2.6 L5.0,2.6 L5.0,-2.6 L-6.2,-2.6 Z"/><path fill="#d2d6de" d="M6.2,-2.6 L8.8,-2.6 Q10.3,-2.6 10.3,-1.1 L10.3,1.1 Q10.3,2.6 8.8,2.6 L6.2,2.6 Z"/><circle cx="-7.4" cy="-0.5" r="0.75" fill="#f5f5f5" opacity="0.55"/></g></svg></div>
<div class="t" style="right:295px;top:455px">9,89 %</div>
<div class="ab" style="left:928px;top:456px"><svg width="15" height="15" viewBox="0 0 16 16"><g transform="translate(8,8) rotate(-45)"><path fill="#d2d6de" d="M-9.6,-0.9 Q-9.8,0 -9.6,0.9 L-6.2,2.6 L5.0,2.6 L5.0,-2.6 L-6.2,-2.6 Z"/><path fill="#d2d6de" d="M6.2,-2.6 L8.8,-2.6 Q10.3,-2.6 10.3,-1.1 L10.3,1.1 Q10.3,2.6 8.8,2.6 L6.2,2.6 Z"/><circle cx="-7.4" cy="-0.5" r="0.75" fill="#f5f5f5" opacity="0.55"/></g></svg></div>
<div class="t" style="right:205px;top:455px">2,86 €</div>
<div class="t" style="right:107px;top:455px">0,16 €</div>
<div class="ab" style="left:1116px;top:456px"><svg width="15" height="15" viewBox="0 0 16 16"><g transform="translate(8,8) rotate(-45)"><path fill="#d2d6de" d="M-9.6,-0.9 Q-9.8,0 -9.6,0.9 L-6.2,2.6 L5.0,2.6 L5.0,-2.6 L-6.2,-2.6 Z"/><path fill="#d2d6de" d="M6.2,-2.6 L8.8,-2.6 Q10.3,-2.6 10.3,-1.1 L10.3,1.1 Q10.3,2.6 8.8,2.6 L6.2,2.6 Z"/><circle cx="-7.4" cy="-0.5" r="0.75" fill="#f5f5f5" opacity="0.55"/></g></svg></div>
<div class="t" style="right:17px;top:455px">3,02 €</div>
<div class="cb" style="left:16px;top:491px"></div>
<div class="t" style="left:53px;top:492px;color:#3c8dbc">107 - Salade de 8 fruits</div>
<div class="ab" style="left:491px;top:493px"><svg width="11" height="14" viewBox="0 0 11 14"><path fill="#444" d="M1,2 H3.3 Q3.5,0.1 5.15,0.1 Q6.8,0.1 7,2 H9.3 Q10.3,2 10.3,3 V12.4 Q10.3,13.4 9.3,13.4 H1 Q0,13.4 0,12.4 V3 Q0,2 1,2 Z"/><rect x="1.9" y="4.95" width="1.3" height="1.3" fill="#f5f5f5"/><rect x="4.1" y="4.95" width="4.7" height="1.3" fill="#f5f5f5"/><rect x="1.9" y="7.35" width="1.3" height="1.3" fill="#f5f5f5"/><rect x="4.1" y="7.35" width="4.7" height="1.3" fill="#f5f5f5"/><rect x="1.9" y="9.75" width="1.3" height="1.3" fill="#f5f5f5"/><rect x="4.1" y="9.75" width="4.7" height="1.3" fill="#f5f5f5"/></svg></div>
<div class="t" style="left:518px;top:492px">Seau 3 kilos</div>
<div class="ab" style="left:737px;top:493px"><svg width="15" height="15" viewBox="0 0 16 16"><g transform="translate(8,8) rotate(-45)"><path fill="#00a65a" d="M-9.6,-0.9 Q-9.8,0 -9.6,0.9 L-6.2,2.6 L5.0,2.6 L5.0,-2.6 L-6.2,-2.6 Z"/><path fill="#00a65a" d="M6.2,-2.6 L8.8,-2.6 Q10.3,-2.6 10.3,-1.1 L10.3,1.1 Q10.3,2.6 8.8,2.6 L6.2,2.6 Z"/><circle cx="-7.4" cy="-0.5" r="0.75" fill="#f5f5f5" opacity="0.55"/></g></svg></div>
<div class="t" style="right:390px;top:492px">9 %</div>
<div class="ab" style="left:833px;top:493px"><svg width="15" height="15" viewBox="0 0 16 16"><g transform="translate(8,8) rotate(-45)"><path fill="#d2d6de" d="M-9.6,-0.9 Q-9.8,0 -9.6,0.9 L-6.2,2.6 L5.0,2.6 L5.0,-2.6 L-6.2,-2.6 Z"/><path fill="#d2d6de" d="M6.2,-2.6 L8.8,-2.6 Q10.3,-2.6 10.3,-1.1 L10.3,1.1 Q10.3,2.6 8.8,2.6 L6.2,2.6 Z"/><circle cx="-7.4" cy="-0.5" r="0.75" fill="#f5f5f5" opacity="0.55"/></g></svg></div>
<div class="t" style="right:295px;top:492px">9,89 %</div>
<div class="ab" style="left:928px;top:493px"><svg width="15" height="15" viewBox="0 0 16 16"><g transform="translate(8,8) rotate(-45)"><path fill="#d2d6de" d="M-9.6,-0.9 Q-9.8,0 -9.6,0.9 L-6.2,2.6 L5.0,2.6 L5.0,-2.6 L-6.2,-2.6 Z"/><path fill="#d2d6de" d="M6.2,-2.6 L8.8,-2.6 Q10.3,-2.6 10.3,-1.1 L10.3,1.1 Q10.3,2.6 8.8,2.6 L6.2,2.6 Z"/><circle cx="-7.4" cy="-0.5" r="0.75" fill="#f5f5f5" opacity="0.55"/></g></svg></div>
<div class="t" style="right:205px;top:492px">2,86 €</div>
<div class="t" style="right:107px;top:492px">0,16 €</div>
<div class="ab" style="left:1116px;top:493px"><svg width="15" height="15" viewBox="0 0 16 16"><g transform="translate(8,8) rotate(-45)"><path fill="#d2d6de" d="M-9.6,-0.9 Q-9.8,0 -9.6,0.9 L-6.2,2.6 L5.0,2.6 L5.0,-2.6 L-6.2,-2.6 Z"/><path fill="#d2d6de" d="M6.2,-2.6 L8.8,-2.6 Q10.3,-2.6 10.3,-1.1 L10.3,1.1 Q10.3,2.6 8.8,2.6 L6.2,2.6 Z"/><circle cx="-7.4" cy="-0.5" r="0.75" fill="#f5f5f5" opacity="0.55"/></g></svg></div>
<div class="t" style="right:17px;top:492px">3,02 €</div>
<div class="cb" style="left:16px;top:528px"></div>
<div class="t" style="left:53px;top:529px;color:#3c8dbc">1091 - Pomme de terre Parisienne</div>
<div class="ab" style="left:491px;top:530px"><svg width="11" height="14" viewBox="0 0 11 14"><path fill="#444" d="M1,2 H3.3 Q3.5,0.1 5.15,0.1 Q6.8,0.1 7,2 H9.3 Q10.3,2 10.3,3 V12.4 Q10.3,13.4 9.3,13.4 H1 Q0,13.4 0,12.4 V3 Q0,2 1,2 Z"/><rect x="1.9" y="4.95" width="1.3" height="1.3" fill="#f5f5f5"/><rect x="4.1" y="4.95" width="4.7" height="1.3" fill="#f5f5f5"/><rect x="1.9" y="7.35" width="1.3" height="1.3" fill="#f5f5f5"/><rect x="4.1" y="7.35" width="4.7" height="1.3" fill="#f5f5f5"/><rect x="1.9" y="9.75" width="1.3" height="1.3" fill="#f5f5f5"/><rect x="4.1" y="9.75" width="4.7" height="1.3" fill="#f5f5f5"/></svg></div>
<div class="t" style="left:518px;top:529px">Kilogramme</div>
<div class="ab" style="left:737px;top:530px"><svg width="15" height="15" viewBox="0 0 16 16"><g transform="translate(8,8) rotate(-45)"><path fill="#00a65a" d="M-9.6,-0.9 Q-9.8,0 -9.6,0.9 L-6.2,2.6 L5.0,2.6 L5.0,-2.6 L-6.2,-2.6 Z"/><path fill="#00a65a" d="M6.2,-2.6 L8.8,-2.6 Q10.3,-2.6 10.3,-1.1 L10.3,1.1 Q10.3,2.6 8.8,2.6 L6.2,2.6 Z"/><circle cx="-7.4" cy="-0.5" r="0.75" fill="#f5f5f5" opacity="0.55"/></g></svg></div>
<div class="t" style="right:390px;top:529px">9 %</div>
<div class="ab" style="left:833px;top:530px"><svg width="15" height="15" viewBox="0 0 16 16"><g transform="translate(8,8) rotate(-45)"><path fill="#d2d6de" d="M-9.6,-0.9 Q-9.8,0 -9.6,0.9 L-6.2,2.6 L5.0,2.6 L5.0,-2.6 L-6.2,-2.6 Z"/><path fill="#d2d6de" d="M6.2,-2.6 L8.8,-2.6 Q10.3,-2.6 10.3,-1.1 L10.3,1.1 Q10.3,2.6 8.8,2.6 L6.2,2.6 Z"/><circle cx="-7.4" cy="-0.5" r="0.75" fill="#f5f5f5" opacity="0.55"/></g></svg></div>
<div class="t" style="right:295px;top:529px">9,89 %</div>
<div class="ab" style="left:928px;top:530px"><svg width="15" height="15" viewBox="0 0 16 16"><g transform="translate(8,8) rotate(-45)"><path fill="#d2d6de" d="M-9.6,-0.9 Q-9.8,0 -9.6,0.9 L-6.2,2.6 L5.0,2.6 L5.0,-2.6 L-6.2,-2.6 Z"/><path fill="#d2d6de" d="M6.2,-2.6 L8.8,-2.6 Q10.3,-2.6 10.3,-1.1 L10.3,1.1 Q10.3,2.6 8.8,2.6 L6.2,2.6 Z"/><circle cx="-7.4" cy="-0.5" r="0.75" fill="#f5f5f5" opacity="0.55"/></g></svg></div>
<div class="t" style="right:205px;top:529px">1,26 €</div>
<div class="t" style="right:107px;top:529px">0,07 €</div>
<div class="ab" style="left:1116px;top:530px"><svg width="15" height="15" viewBox="0 0 16 16"><g transform="translate(8,8) rotate(-45)"><path fill="#d2d6de" d="M-9.6,-0.9 Q-9.8,0 -9.6,0.9 L-6.2,2.6 L5.0,2.6 L5.0,-2.6 L-6.2,-2.6 Z"/><path fill="#d2d6de" d="M6.2,-2.6 L8.8,-2.6 Q10.3,-2.6 10.3,-1.1 L10.3,1.1 Q10.3,2.6 8.8,2.6 L6.2,2.6 Z"/><circle cx="-7.4" cy="-0.5" r="0.75" fill="#f5f5f5" opacity="0.55"/></g></svg></div>
<div class="t" style="right:17px;top:529px">1,33 €</div>
<div class="ab" style="left:1028px;top:572px;width:171px;height:34px;border:1px solid #ddd;border-radius:4px;background:#fafafa"></div>
<div class="ab" style="left:1028px;top:572px;width:34px;height:34px;background:#337ab7;border-radius:4px 0 0 4px"></div>
<div class="ab" style="left:1127px;top:573px;width:38px;height:32px;background:#fff"></div>
<div class="ab" style="left:1093px;top:573px;width:1px;height:32px;background:#ddd"></div>
<div class="ab" style="left:1126px;top:573px;width:1px;height:32px;background:#ddd"></div>
<div class="ab" style="left:1165px;top:573px;width:1px;height:32px;background:#ddd"></div>
<div class="t" style="left:1029.5px;width:30px;top:580px;text-align:center;color:#fff">1</div>
<div class="t" style="left:1062.5px;width:30px;top:580px;text-align:center;color:#555">2</div>
<div class="t" style="left:1095.5px;width:30px;top:580px;text-align:center;color:#555">3</div>
<div class="t" style="left:1167px;width:30px;top:580px;text-align:center;color:#555">5</div>
<div class="ab" style="left:1140.5px;top:587px;width:2.5px;height:2.5px;border-radius:50%;background:#666"></div>
<div class="ab" style="left:1145.5px;top:587px;width:2.5px;height:2.5px;border-radius:50%;background:#666"></div>
<div class="ab" style="left:1150.5px;top:587px;width:2.5px;height:2.5px;border-radius:50%;background:#666"></div>
</div></body></html>
